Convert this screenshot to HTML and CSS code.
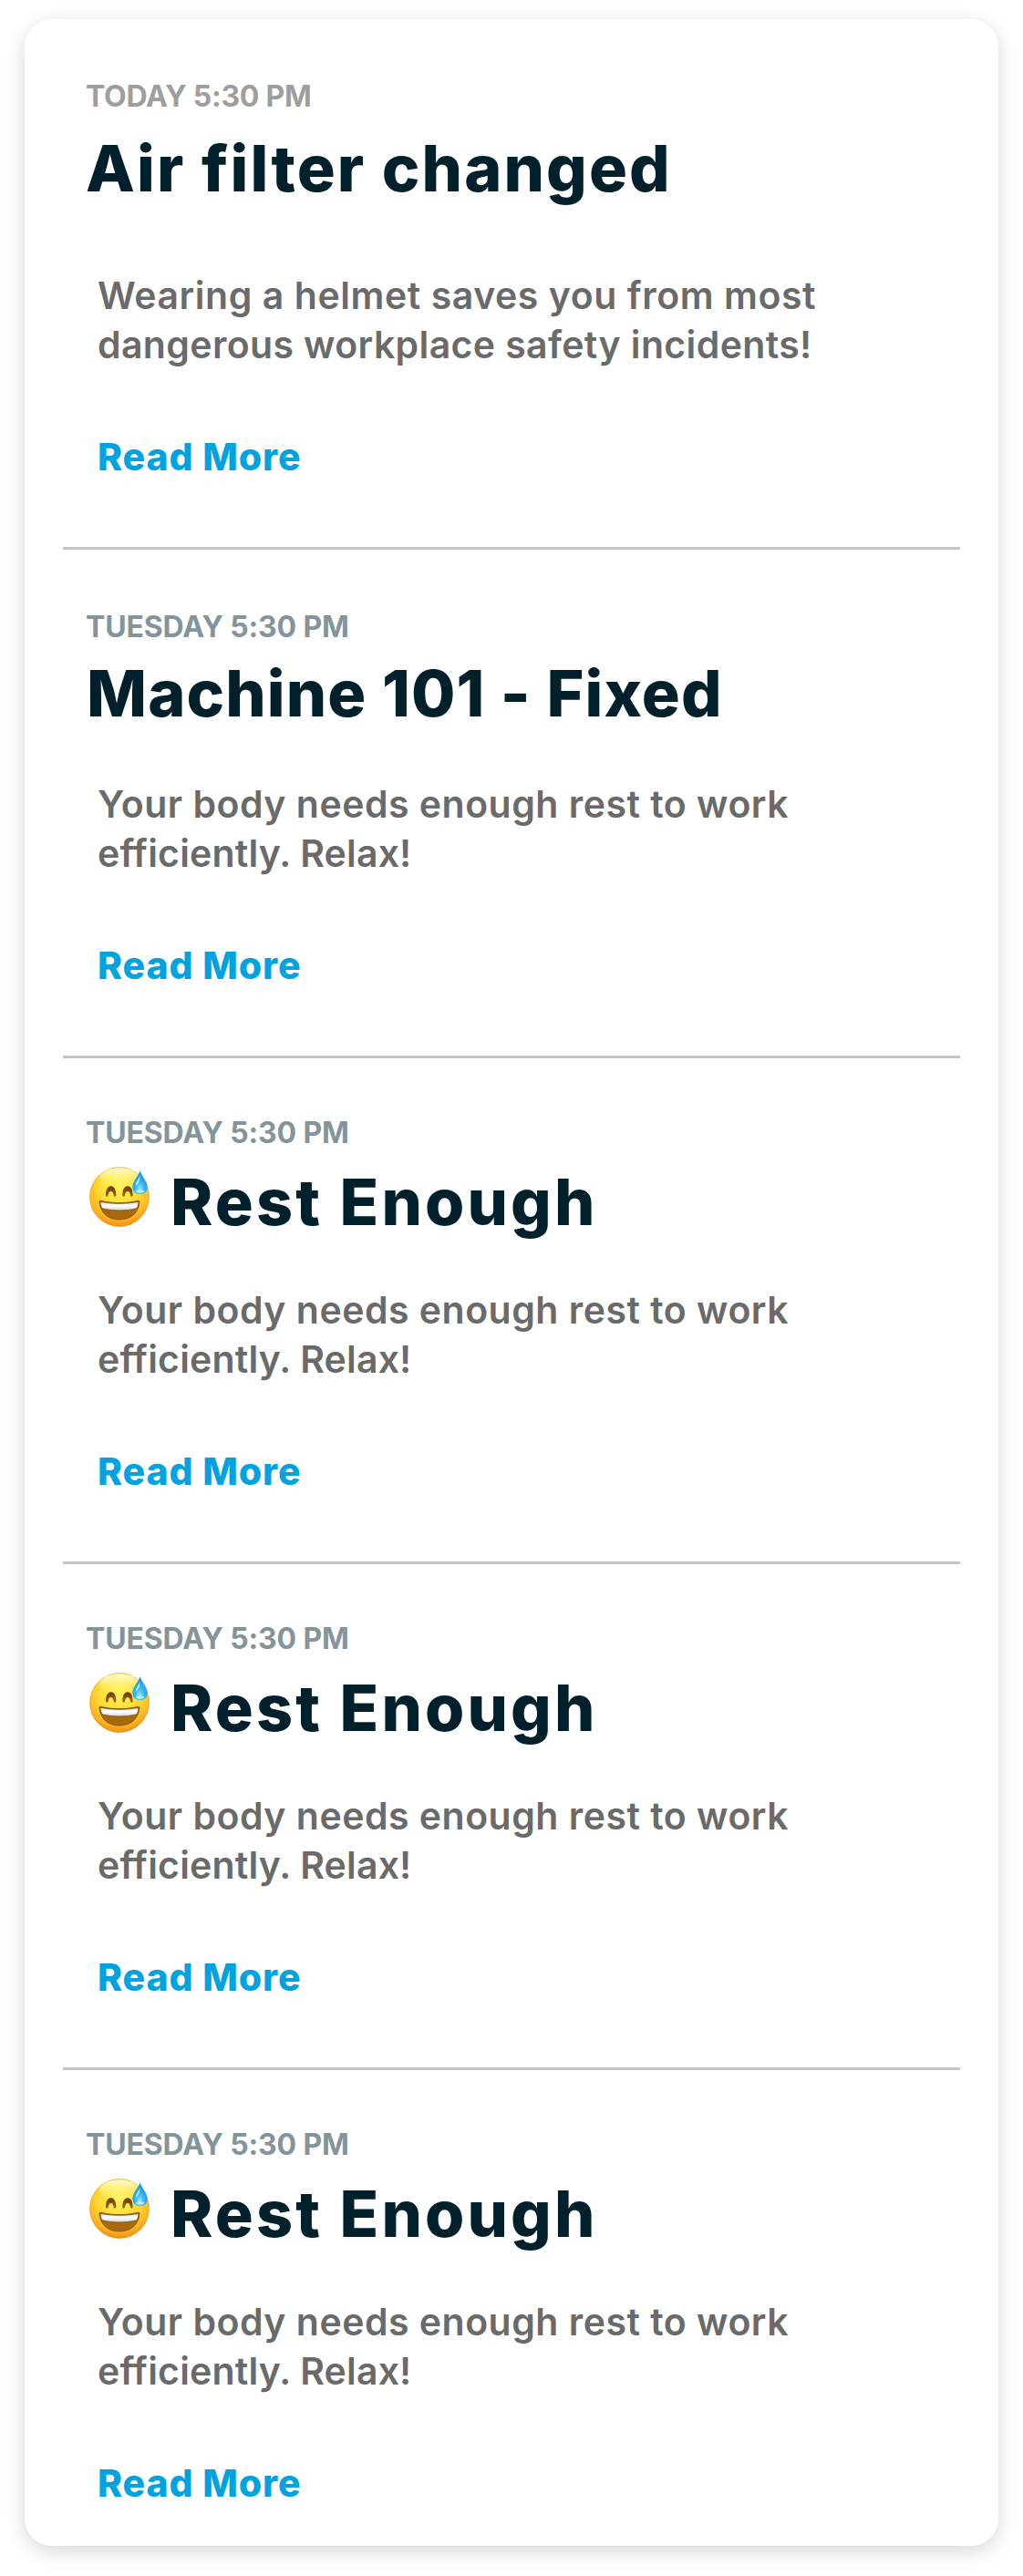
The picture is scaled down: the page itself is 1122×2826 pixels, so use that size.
FILE: index.html
```
<!DOCTYPE html>
<html lang="en">
<head>
<meta charset="utf-8">
<title>Notifications</title>
<link rel="stylesheet" href="styles.css">
</head>
<body>
<svg class="defs" width="0" height="0" aria-hidden="true">
  <defs>
    <radialGradient id="face" cx="0.5" cy="0.32" r="0.7">
      <stop offset="0" stop-color="#fff35c"/>
      <stop offset="0.45" stop-color="#ffdf3a"/>
      <stop offset="0.78" stop-color="#fdb823"/>
      <stop offset="1" stop-color="#ee8a13"/>
    </radialGradient>
    <linearGradient id="shine" x1="0" y1="0" x2="0" y2="1">
      <stop offset="0" stop-color="#fffde0" stop-opacity="0.95"/>
      <stop offset="1" stop-color="#fff35c" stop-opacity="0"/>
    </linearGradient>
    <linearGradient id="eye" x1="0" y1="0" x2="0" y2="1">
      <stop offset="0" stop-color="#6b3a00"/>
      <stop offset="1" stop-color="#a06a08"/>
    </linearGradient>
    <linearGradient id="teeth" x1="0" y1="0" x2="0" y2="1">
      <stop offset="0" stop-color="#d9dadd"/>
      <stop offset="0.45" stop-color="#ffffff"/>
      <stop offset="1" stop-color="#d5d5d8"/>
    </linearGradient>
    <radialGradient id="drop" cx="0.48" cy="0.78" r="0.62">
      <stop offset="0" stop-color="#9be9ff"/>
      <stop offset="0.4" stop-color="#3fbdf7"/>
      <stop offset="1" stop-color="#1691e2"/>
    </radialGradient>
    <symbol id="sweat-smile" viewBox="39 45 198 198">
      <circle cx="138" cy="144" r="98" fill="url(#face)"/>
      <circle cx="138" cy="144" r="97" fill="none" stroke="#e8900f" stroke-opacity="0.65" stroke-width="2.5"/>
      <ellipse cx="138" cy="83" rx="66" ry="34" fill="url(#shine)"/>
      <path d="M93 138C93 119 100 109 110 109S127 119 127 138C127 145 120 145 119 139C118 130 115 126 110 126S102 130 101 139C100 145 93 145 93 138Z" fill="url(#eye)"/>
      <path d="M148 138C148 119 155 109 165 109S182 119 182 138C182 145 175 145 174 139C173 130 170 126 165 126S157 130 156 139C155 145 148 145 148 138Z" fill="url(#eye)"/>
      <path d="M72 161C71 157 74 156 78 157C116 166 160 166 198 157C202 156 205 157 204 161C201 197 175 219 138 219S75 197 72 161Z" fill="#a8690a" stroke="#7a4600" stroke-width="2"/>
      <path d="M75 160C116 168 160 168 201 160C201 168 199 175 195 182C160 191 116 191 81 182C77 175 75 168 75 160Z" fill="url(#teeth)" stroke="#6b3d02" stroke-width="2"/>
      <path d="M206 57C209 75 230 91 230 112C230 127 220 136 206 136S181 127 181 112C181 91 202 75 206 57Z" fill="url(#drop)"/>
      <path d="M205 72C203 87 191 97 191 108C198 101 207 92 205 72Z" fill="#e2f8ff" fill-opacity="0.9"/>
      <ellipse cx="206" cy="126" rx="14" ry="5" fill="#d4f5ff" fill-opacity="0.75"/>
    </symbol>
  </defs>
</svg>

<main class="card">
  <article class="item item--today">
    <p class="meta">TODAY 5:30 PM</p>
    <h2 class="title title--air">Air filter changed</h2>
    <p class="text">Wearing a helmet saves you from most<br><span class="tight">dangerous workplace safety incidents!</span></p>
    <a class="more">Read More</a>
  </article>
  <article class="item item--machine">
    <p class="meta">TUESDAY 5:30 PM</p>
    <h2 class="title title--machine">Machine 101 - Fixed</h2>
    <p class="text">Your body needs enough rest to work<br><span class="tight">efficiently. Relax!</span></p>
    <a class="more">Read More</a>
  </article>
  <article class="item">
    <p class="meta">TUESDAY 5:30 PM</p>
    <h2 class="title"><svg class="emoji"><use href="#sweat-smile"/></svg>Rest Enough</h2>
    <p class="text">Your body needs enough rest to work<br><span class="tight">efficiently. Relax!</span></p>
    <a class="more">Read More</a>
  </article>
  <article class="item">
    <p class="meta">TUESDAY 5:30 PM</p>
    <h2 class="title"><svg class="emoji"><use href="#sweat-smile"/></svg>Rest Enough</h2>
    <p class="text">Your body needs enough rest to work<br><span class="tight">efficiently. Relax!</span></p>
    <a class="more">Read More</a>
  </article>
  <article class="item">
    <p class="meta">TUESDAY 5:30 PM</p>
    <h2 class="title"><svg class="emoji"><use href="#sweat-smile"/></svg>Rest Enough</h2>
    <p class="text">Your body needs enough rest to work<br><span class="tight">efficiently. Relax!</span></p>
    <a class="more">Read More</a>
  </article>
</main>
</body>
</html>
```
FILE: styles.css
```
* {
  box-sizing: border-box;
}

body {
  margin: 0;
  padding: 21px 27px 33px;
  background: #fff;
  font-family: Inter, "Liberation Sans", sans-serif;
}

.defs {
  display: block;
}

.card {
  display: flex;
  flex-direction: column;
  height: 2772px;
  padding: 0 42px;
  border-radius: 30px;
  background: #fff;
  box-shadow: 0 6px 22px rgba(0, 0, 0, 0.16);
}

.item {
  display: flex;
  flex-direction: column;
  padding: 62px 0 72px 25px;
  border-bottom: 3px solid #c4c4c4;
}

.item:last-child {
  padding-bottom: 42px;
  border-bottom: 0;
}

.item--today,
.item--machine {
  padding-top: 65px;
}

.meta {
  margin: 0;
  color: #84949b;
  font-size: 32px;
  font-weight: 700;
  line-height: 40px;
  letter-spacing: -0.14px;
}

.item--today .meta {
  color: #9e9e9e;
  letter-spacing: -0.23px;
}

.title {
  display: flex;
  align-items: flex-start;
  margin: 14px 0 49px;
  color: #00202b;
  font-size: 70px;
  font-weight: 800;
  line-height: 84px;
  letter-spacing: 3.15px;
  white-space: nowrap;
}

.title--air {
  margin: 17px 0 70px;
  letter-spacing: 2.12px;
}

.title--machine {
  margin: 11px 0 52px 1px;
  letter-spacing: 1.11px;
}

.emoji {
  flex: none;
  width: 66px;
  height: 66px;
  margin: 3px 23px 0 4px;
}

.text {
  margin: 0 0 69px 13px;
  color: #6a6a6a;
  font-size: 41px;
  font-weight: 600;
  line-height: 54px;
  letter-spacing: 0.5px;
}

.item--today .text {
  letter-spacing: 0.55px;
}

.text .tight {
  letter-spacing: 0.17px;
}

.item--today .tight {
  letter-spacing: 0.37px;
}

.more {
  margin-left: 13px;
  color: #00a3e0;
  font-size: 41px;
  font-weight: 800;
  line-height: 54px;
  letter-spacing: 0.86px;
}
```
